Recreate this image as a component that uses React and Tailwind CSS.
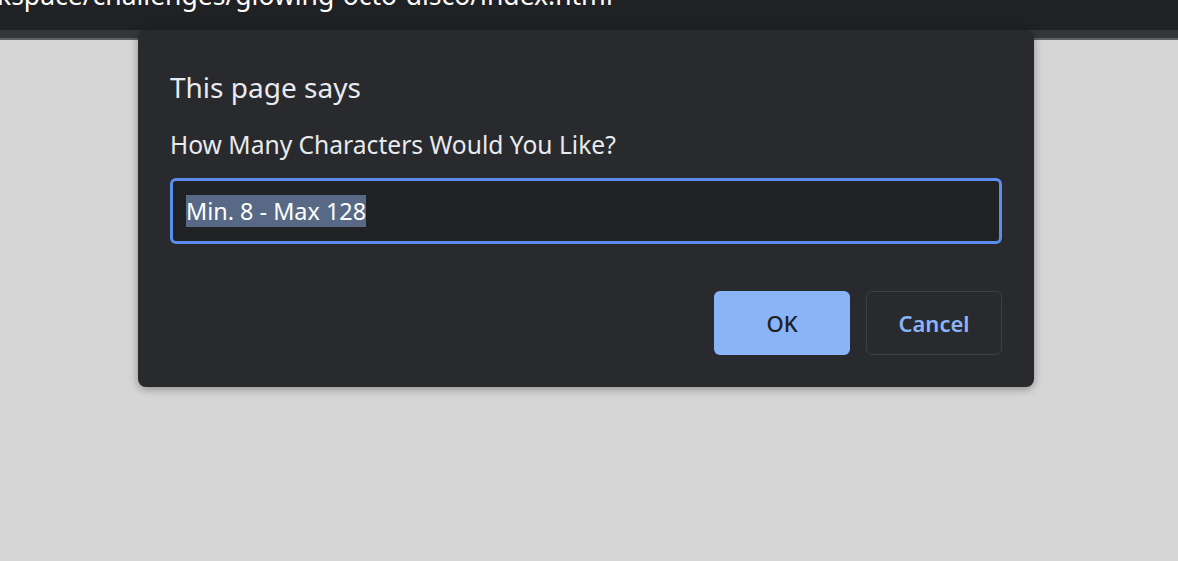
export default function App() {
  return (
    <div className="relative h-[561px] w-[1178px] overflow-hidden bg-[#d6d6d6]" style={{ fontFamily: '"Noto Sans", "Open Sans", sans-serif' }}>
      <div className="h-[30px] overflow-hidden bg-[#202124]">
        <div className="-mt-[22px] -ml-[3px] whitespace-nowrap text-[26.5px] leading-[34px] text-white">
          kspace/challenges/glowing-octo-disco/index.html
        </div>
      </div>
      <div className="h-[8px] bg-[#35363a]" />
      <div className="h-[2px] bg-[#5f6063]" />

      <div className="absolute left-[138px] top-[30px] w-[896px] rounded-lg bg-[#292a2d] px-8 pb-8 pt-[37px] shadow-[0_2px_8px_rgba(0,0,0,0.35)]">
        <h1 className="text-[28px] leading-[40px] text-[#e8eaed]">This page says</h1>
        <p className="mt-[22px] text-[24.6px] leading-[32px] text-[#e8eaed]">How Many Characters Would You Like?</p>
        <div className="mt-[17px] flex h-[66px] items-center rounded-[6px] border-[3px] border-[#5b8def] bg-[#202124] px-[13px]">
          <span className="bg-[#586985] text-[23.4px] leading-[32px] text-white">Min. 8 - Max 128</span>
        </div>
        <div className="mt-[47px] flex justify-end gap-4">
          <button className="h-[64px] w-[136px] rounded-[6px] bg-[#8ab4f8] text-[22px] font-medium text-[#202124]">OK</button>
          <button className="h-[64px] w-[136px] rounded-[6px] border border-[#3c4043] text-[22px] font-semibold text-[#8ab4f8]">Cancel</button>
        </div>
      </div>
    </div>
  );
}
